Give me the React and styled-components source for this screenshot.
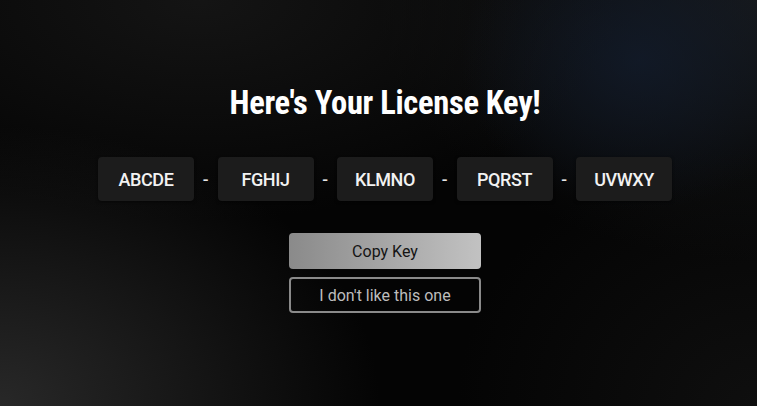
import { Fragment } from "react";
import styled, { createGlobalStyle } from "styled-components";

const GlobalStyle = createGlobalStyle`
  html, body {
    margin: 0;
    padding: 0;
    background: #050505;
  }
  * {
    box-sizing: border-box;
  }
`;

const Page = styled.div`
  width: 100vw;
  height: 100vh;
  overflow: hidden;
  display: flex;
  flex-direction: column;
  align-items: center;
  padding: 84px 0 0 13px;
  font-family: Roboto, "Liberation Sans", sans-serif;
  background:
    radial-gradient(ellipse 180px 150px at 640px 60px, rgba(18, 28, 45, 0.75), transparent 100%),
    radial-gradient(ellipse 380px 280px at 0px 406px, rgba(42, 42, 42, 0.95), transparent 100%),
    radial-gradient(ellipse 420px 220px at 200px 0px, rgba(22, 22, 22, 0.9), transparent 100%),
    radial-gradient(ellipse 380px 260px at 757px 0px, rgba(24, 26, 28, 0.9), transparent 100%),
    radial-gradient(ellipse 300px 260px at 757px 406px, rgba(16, 16, 16, 0.9), transparent 100%),
    #040404;
`;

const Title = styled.h1`
  margin: 0;
  font-family: "Roboto Condensed", Roboto, "Liberation Sans Narrow", sans-serif;
  font-stretch: condensed;
  font-weight: 700;
  font-size: 32.5px;
  line-height: 38px;
  color: #ffffff;
  letter-spacing: -0.3px;
`;

const KeyRow = styled.div`
  display: flex;
  align-items: center;
  gap: 7px;
  margin-top: 35px;
`;

const Segment = styled.div`
  width: 96px;
  height: 44px;
  display: flex;
  align-items: center;
  justify-content: center;
  background: #1c1c1c;
  border-radius: 4px;
  box-shadow: 0 1px 3px rgba(0, 0, 0, 0.5);
  color: #f2f2f2;
  font-size: 18px;
  font-weight: 500;
  letter-spacing: -0.4px;
`;

const Dash = styled.span`
  width: 9.5px;
  text-align: center;
  color: #e6e6e6;
  font-size: 17px;
  font-weight: 500;
`;

const Actions = styled.div`
  display: flex;
  flex-direction: column;
  gap: 8px;
  margin-top: 32px;
`;

const Button = styled.button`
  width: 192px;
  height: 36px;
  border-radius: 4px;
  font-family: Roboto, "Liberation Sans", sans-serif;
  font-size: 16px;
  cursor: pointer;
  border: ${(p) => (p.$outline ? "2px solid #8a8a8a" : "none")};
  background: ${(p) =>
    p.$outline ? "transparent" : "linear-gradient(90deg, #8a8a8a, #c2c2c2)"};
  color: ${(p) => (p.$outline ? "#bdbdbd" : "#141414")};
`;

const segments = ["ABCDE", "FGHIJ", "KLMNO", "PQRST", "UVWXY"];

export default function App() {
  return (
    <>
      <GlobalStyle />
      <Page>
        <Title>Here's Your License Key!</Title>
        <KeyRow>
          {segments.map((s, i) => (
            <Fragment key={s}>
              {i > 0 && <Dash>-</Dash>}
              <Segment>{s}</Segment>
            </Fragment>
          ))}
        </KeyRow>
        <Actions>
          <Button>Copy Key</Button>
          <Button $outline>I don't like this one</Button>
        </Actions>
      </Page>
    </>
  );
}
